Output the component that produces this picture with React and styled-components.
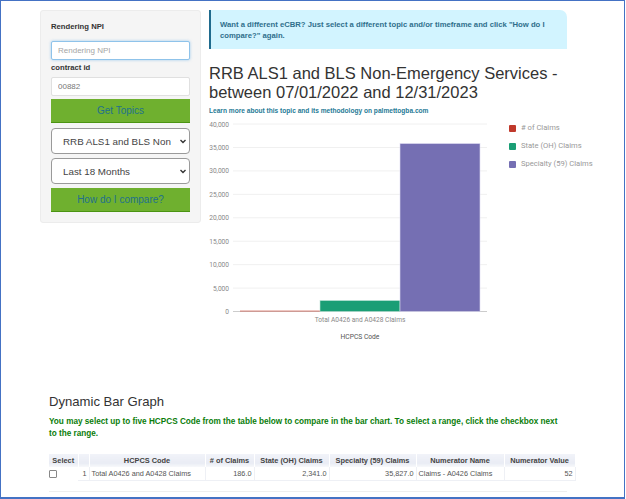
import React from "react";
import styled, { createGlobalStyle } from "styled-components";

const Global = createGlobalStyle`
  html, body { margin: 0; padding: 0; background: #fff; }
  body { font-family: "Liberation Sans", Arial, sans-serif; color: #333; }
  * { box-sizing: border-box; }
`;

const Frame = styled.div`
  width: 625px;
  height: 499px;
  border: 1px solid #4472c4;
  border-width: 1px 1px 2px 1px;
  padding: 9px 0 0 39px;
  overflow: hidden;
`;

const Top = styled.div`
  display: flex;
  align-items: flex-start;
  gap: 8px;
  height: 383px;
`;

const Sidebar = styled.form`
  width: 161px;
  height: 213px;
  flex: none;
  background: #f5f5f5;
  border: 1px solid #ececec;
  border-radius: 3px;
  padding: 11px 10px 0 10px;
  display: flex;
  flex-direction: column;
`;

const FieldLabel = styled.label`
  font-size: 7.7px;
  font-weight: bold;
  line-height: 10px;
  color: #333;
  margin-bottom: ${(p) => p.$after}px;
`;

const TextInput = styled.input`
  height: 19px;
  width: 100%;
  font: 8px "Liberation Sans", Arial, sans-serif;
  color: #777;
  background: #fff;
  padding: 0 6px;
  border-radius: 2px;
  border: 1px solid ${(p) => (p.$focused ? "#8fc3ea" : "#e0e0e0")};
  box-shadow: ${(p) => (p.$focused ? "0 0 3px rgba(102,175,233,.6)" : "none")};
  margin-bottom: 3px;
  outline: none;
  &::placeholder { color: #a5a5a5; }
`;

const ActionButton = styled.button`
  height: 24px;
  width: 100%;
  flex: none;
  background: #6fb02f;
  border: 0;
  border-bottom: 1px solid #4b9412;
  color: #22708c;
  font: 10px "Liberation Sans", Arial, sans-serif;
  padding: 0;
  margin-bottom: ${(p) => p.$after}px;
`;

const SelectWrap = styled.div`
  height: 26px;
  flex: none;
  border: 1px solid #9a9a9a;
  border-radius: 4px;
  background: #fff;
  display: flex;
  align-items: center;
  justify-content: space-between;
  padding: 0 2px 0 11px;
  margin-bottom: 4px;
  font-size: 9.8px;
  color: #444;
`;

const Main = styled.div`
  width: 395px;
  flex: none;
`;

const Alert = styled.div`
  width: 358px;
  height: 39px;
  background: #d2f4ff;
  border-left: 2px solid #1f6b8e;
  border-radius: 0 7px 0 0;
  padding: 9px 10px 0 9px;
  font-size: 7.7px;
  font-weight: bold;
  line-height: 11px;
  color: #2f6f8c;
`;

const Title = styled.h1`
  margin: 15px 0 0;
  font-size: 16.5px;
  font-weight: normal;
  line-height: 19px;
  color: #333;
`;

const LearnMore = styled.a`
  display: block;
  margin-top: 4px;
  font-size: 6.6px;
  font-weight: bold;
  line-height: 9px;
  color: #1f7a96;
`;

const ChartRow = styled.div`
  display: flex;
  align-items: flex-start;
`;

const Legend = styled.ul`
  list-style: none;
  margin: 8px 0 0 5px;
  padding: 0;
  display: flex;
  flex-direction: column;
  gap: 8px;
  font: 7.6px Roboto, sans-serif;
  color: #999;
`;

const LegendItem = styled.li`
  display: flex;
  align-items: center;
  gap: 5px;
  line-height: 10px;
  white-space: nowrap;
`;

const Swatch = styled.span`
  width: 7px;
  height: 7px;
  border-radius: 1px;
  background: ${(p) => p.$color};
`;

const Section = styled.section`
  padding-left: 9px;
`;

const SectionTitle = styled.h2`
  margin: 0;
  font-size: 13.1px;
  font-weight: normal;
  line-height: 18px;
  color: #333;
`;

const Hint = styled.p`
  margin: 5px 0 0;
  width: 518px;
  font-size: 8.2px;
  font-weight: bold;
  line-height: 12px;
  color: #0a7d0a;
`;

const Table = styled.table`
  margin-top: 14px;
  width: 526px;
  border-collapse: collapse;
  table-layout: fixed;
  font-size: 7.3px;
`;

const Th = styled.th`
  height: 13px;
  padding: 0;
  font-size: 7.4px;
  font-weight: bold;
  color: #444;
  text-align: center;
  background: linear-gradient(#f1f3f9, #e9ecf4 70%, #f7f8fb);
  border-right: 1px solid #fff;
`;

const Td = styled.td`
  height: 13px;
  padding: 0 2px;
  color: #555;
  text-align: ${(p) => p.$align || "left"};
  border-right: 1px solid #eef0f5;
  border-bottom: 1px solid #eef0f5;
`;

const CheckCell = styled.td`
  height: 13px;
  padding: 0;
`;

const Check = styled.span`
  display: block;
  width: 8px;
  height: 8px;
  border: 1px solid #888;
  border-radius: 1px;
`;

const Footer = styled.div`
  margin-top: 10px;
  width: 518px;
  height: 1px;
  background: #eeeeee;
`;

const ticks = [40000, 35000, 30000, 25000, 20000, 15000, 10000, 5000, 0];

const bars = [
  { x: 31, value: 186, color: "#d0685c", edge: "none" },
  { x: 111, value: 2341, color: "#1a9e75", edge: "#bfe5d8" },
  { x: 191, value: 35827, color: "#756fb3", edge: "#dddaf0" },
];

const yOf = (v) => 9 + ((40000 - v) / 40000) * 187.5;

const Chart = () => (
  <svg width="295" height="230" viewBox="0 0 295 230">
    {ticks.map((t) => (
      <g key={t}>
        <line x1="24" x2="278" y1={yOf(t)} y2={yOf(t)} stroke={t === 0 ? "#ccc" : "#f0f0f0"} strokeWidth="1" />
        <text x="20" y={yOf(t) + 2.5} textAnchor="end" fontFamily="Roboto, sans-serif" fontSize="6.6" fill="#888">
          {t.toLocaleString("en-US")}
        </text>
      </g>
    ))}
    {bars.map((b) => (
      <rect key={b.x} x={b.x} y={yOf(b.value)} width="80" height={196.5 - yOf(b.value)} fill={b.color} stroke={b.edge} strokeWidth="0.6" />
    ))}
    <text x="151" y="207" textAnchor="middle" fontFamily="Roboto, sans-serif" fontSize="6.6" fill="#888">
      Total A0426 and A0428 Claims
    </text>
    <text x="151" y="224" textAnchor="middle" fontFamily="Roboto, sans-serif" fontSize="6.7" fill="#555">
      HCPCS Code
    </text>
  </svg>
);

const Chevron = () => (
  <svg width="8" height="8" viewBox="0 0 8 8">
    <path d="M1.5 3 L4 5.5 L6.5 3" fill="none" stroke="#333" strokeWidth="1.4" />
  </svg>
);

const columns = [
  ["Select", 29], ["", 11], ["HCPCS Code", 116], ["# of Claims", 49],
  ["State (OH) Claims", 75], ["Specialty (59) Claims", 87], ["Numerator Name", 88], ["Numerator Value", 71],
];

export default function App() {
  return (
    <Frame>
      <Global />
      <Top>
        <Sidebar>
          <FieldLabel $after={9}>Rendering NPI</FieldLabel>
          <TextInput $focused placeholder="Rendering NPI" />
          <FieldLabel $after={4}>contract id</FieldLabel>
          <TextInput defaultValue="00882" />
          <ActionButton type="button" $after={5}>Get Topics</ActionButton>
          <SelectWrap>RRB ALS1 and BLS Non<Chevron /></SelectWrap>
          <SelectWrap>Last 18 Months<Chevron /></SelectWrap>
          <ActionButton type="button" $after={0}>How do I compare?</ActionButton>
        </Sidebar>
        <Main>
          <Alert>Want a different eCBR? Just select a different topic and/or timeframe and click "How do I compare?" again.</Alert>
          <Title>RRB ALS1 and BLS Non-Emergency Services - between 07/01/2022 and 12/31/2023</Title>
          <LearnMore>Learn more about this topic and its methodology on palmettogba.com</LearnMore>
          <ChartRow>
            <Chart />
            <Legend>
              <LegendItem><Swatch $color="#c0392b" /># of Claims</LegendItem>
              <LegendItem><Swatch $color="#1a9e75" />State (OH) Claims</LegendItem>
              <LegendItem><Swatch $color="#756fb3" />Specialty (59) Claims</LegendItem>
            </Legend>
          </ChartRow>
        </Main>
      </Top>
      <Section>
        <SectionTitle>Dynamic Bar Graph</SectionTitle>
        <Hint>You may select up to five HCPCS Code from the table below to compare in the bar chart. To select a range, click the checkbox next to the range.</Hint>
        <Table>
          <colgroup>
            {columns.map(([name, w]) => <col key={name + w} width={w} />)}
          </colgroup>
          <thead>
            <tr>{columns.map(([name, w]) => <Th key={name + w}>{name}</Th>)}</tr>
          </thead>
          <tbody>
            <tr>
              <CheckCell><Check /></CheckCell>
              <Td $align="right">1</Td>
              <Td>Total A0426 and A0428 Claims</Td>
              <Td $align="right">186.0</Td>
              <Td $align="right">2,341.0</Td>
              <Td $align="right">35,827.0</Td>
              <Td>Claims - A0426 Claims</Td>
              <Td $align="right">52</Td>
            </tr>
          </tbody>
        </Table>
        <Footer />
      </Section>
    </Frame>
  );
}
